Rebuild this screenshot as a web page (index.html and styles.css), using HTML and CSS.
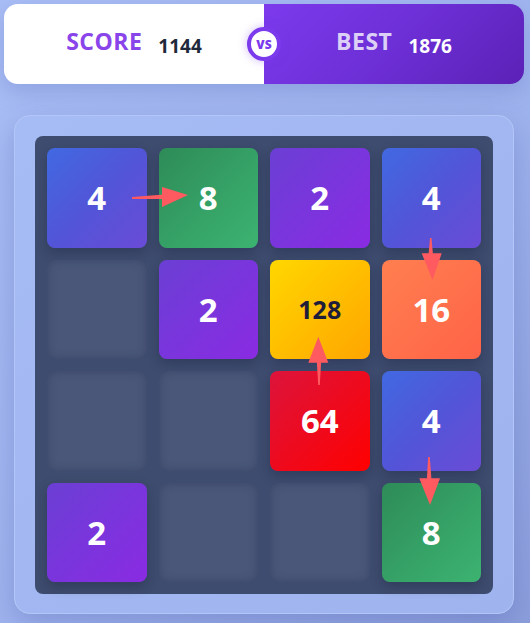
FILE: index.html
```html
<!DOCTYPE html>
<html lang="en">
<head>
<meta charset="utf-8">
<title>2048 Duel</title>
<link rel="stylesheet" href="styles.css">
</head>
<body>
<div class="app">
  <header class="scorebar">
    <div class="side side-score">
      <span class="label">SCORE</span>
      <span class="value">1144</span>
    </div>
    <div class="side side-best">
      <span class="label">BEST</span>
      <span class="value">1876</span>
    </div>
    <div class="vs">VS</div>
  </header>

  <section class="board">
    <div class="grid">
      <div class="cell t4">4</div>
      <div class="cell t8">8</div>
      <div class="cell t2">2</div>
      <div class="cell t4">4</div>

      <div class="cell empty"></div>
      <div class="cell t2">2</div>
      <div class="cell t128">128</div>
      <div class="cell t16">16</div>

      <div class="cell empty"></div>
      <div class="cell empty"></div>
      <div class="cell t64">64</div>
      <div class="cell t4">4</div>

      <div class="cell t2">2</div>
      <div class="cell empty"></div>
      <div class="cell empty"></div>
      <div class="cell t8">8</div>
    </div>

    <svg class="moves" viewBox="0 0 500 499" width="500" height="499" aria-hidden="true">
      <g fill="#ff5a5f">
        <!-- 4 slides right into 8 -->
        <polygon points="118,82 150,79.5 150,84 118,84"/>
        <polygon points="174,80 148,72 148,92"/>
        <!-- 4 drops onto 16 -->
        <polygon points="416,123 417.5,123 419,140 414.5,140"/>
        <polygon points="407.7,138.3 427.7,138.3 418.5,165"/>
        <!-- 64 pushes up into 128 -->
        <polygon points="302.8,246 307.2,246 305.8,270 304.2,270"/>
        <polygon points="304.3,221.7 294.3,247.7 314.3,247.7"/>
        <!-- 4 drops onto 8 -->
        <polygon points="414.2,342 415.8,342 417.5,365 412.8,365"/>
        <polygon points="405.3,363.3 426,363.3 416,390"/>
      </g>
    </svg>
  </section>
</div>
</body>
</html>
```

FILE: styles.css
```css
* {
  box-sizing: border-box;
}

html,
body {
  margin: 0;
  height: 100%;
}

body {
  background: linear-gradient(135deg, #a9bdf5 0%, #9fb3ee 55%, #8c9edb 100%);
  font-family: "Open Sans", "Noto Sans", sans-serif;
  overflow: hidden;
}

.app {
  width: 520px;
  margin-left: 4px;
  padding-top: 4px;
}

/* ---------- score header ---------- */
.scorebar {
  position: relative;
  display: flex;
  height: 80px;
  border-radius: 14px;
  box-shadow: 0 8px 22px rgba(70, 90, 170, 0.25);
}

.side {
  flex: 1;
  display: flex;
  align-items: center;
  justify-content: center;
  gap: 16px;
}

.side-score {
  background: #ffffff;
  border-radius: 14px 0 0 14px;
}

.side-best {
  background: linear-gradient(135deg, #7c3aed 0%, #6d2fd6 50%, #5b21b6 100%);
  border-radius: 0 14px 14px 0;
}

.label {
  font-size: 23px;
  font-weight: 700;
  letter-spacing: 0.5px;
  line-height: 1;
  margin-bottom: 5px;
}

.value {
  font-size: 19px;
  font-weight: 700;
  line-height: 1;
  margin-top: 5px;
}

.side-score .label {
  color: #8a45ea;
}

.side-score .value {
  color: #1e293b;
}

.side-best .label {
  color: #ddd0f7;
}

.side-best .value {
  color: #ffffff;
}

.vs {
  position: absolute;
  left: 243px;
  top: 23px;
  width: 34px;
  height: 34px;
  border-radius: 50%;
  background: #ffffff;
  border: 4px solid #7c3aed;
  color: #7c3aed;
  font-size: 12px;
  font-weight: 800;
  display: flex;
  align-items: center;
  justify-content: center;
  box-shadow: 0 0 10px rgba(124, 58, 237, 0.35);
}

/* ---------- board ---------- */
.board {
  position: relative;
  width: 500px;
  height: 499px;
  margin: 31px 0 0 10px;
  padding: 21px;
  background: linear-gradient(135deg, #a6bcf5, #9fb3ee);
  border: 1px solid #b4c6f7;
  border-radius: 16px;
  box-shadow: 0 10px 28px rgba(60, 80, 160, 0.28);
}

.grid {
  display: grid;
  grid-template-columns: repeat(4, 1fr);
  grid-template-rows: repeat(4, 1fr);
  gap: 12px;
  width: 458px;
  height: 458px;
  padding: 12px;
  background: #3e4c6f;
  border-radius: 8px;
  margin: -1px 0 0 -1px;
}

.cell {
  border-radius: 8px;
  display: flex;
  align-items: center;
  justify-content: center;
  color: #ffffff;
  font-size: 33px;
  font-weight: 700;
  line-height: 1;
  box-shadow: 0 5px 12px rgba(20, 25, 50, 0.3);
}

.cell.empty {
  background: #4a5779;
  box-shadow: inset 0 0 10px rgba(30, 38, 70, 0.35);
}

.t2 {
  background: linear-gradient(135deg, #6b3fd4 0%, #7a35dc 50%, #8a2be2 100%);
}

.t4 {
  background: linear-gradient(135deg, #4169e1 0%, #5255d8 50%, #6a4bd6 100%);
}

.t8 {
  background: linear-gradient(135deg, #2e8b57 0%, #35a065 50%, #3cb371 100%);
}

.t16 {
  background: linear-gradient(135deg, #ff7f50 0%, #ff6347 100%);
}

.t64 {
  background: linear-gradient(135deg, #dc143c 0%, #ff0000 100%);
}

.t128 {
  background: linear-gradient(135deg, #ffd700 0%, #ffa500 100%);
  color: #1f1d3a;
  font-size: 25px;
}

.moves {
  position: absolute;
  left: -1px;
  top: -1px;
  pointer-events: none;
}
```
